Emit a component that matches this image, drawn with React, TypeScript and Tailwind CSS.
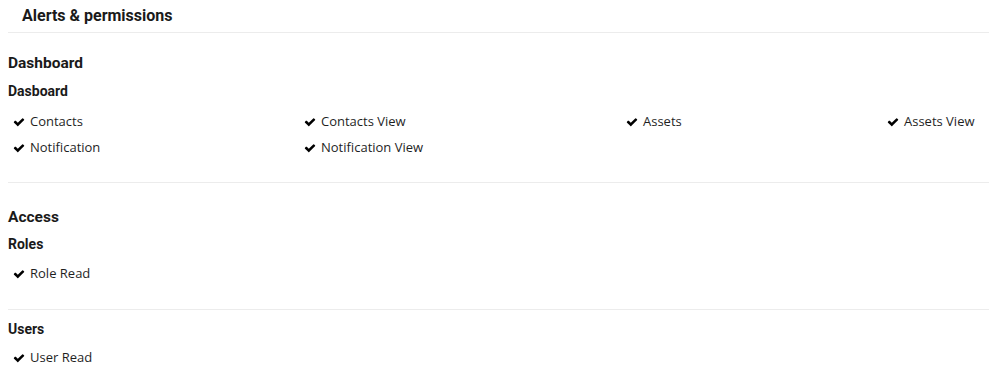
import React from "react";

const Check = () => (
  <svg viewBox="0 0 1792 1792" className="w-[12px] h-[12px] text-black" fill="currentColor">
    <path d="M1671 566q0 40-28 68l-724 724-136 136q-28 28-68 28t-68-28l-136-136-362-362q-28-28-28-68t28-68l136-136q28-28 68-28t68 28l294 295 656-657q28-28 68-28t68 28l136 136q28 28 28 68z" />
  </svg>
);

const Item = ({ label }: { label: string }) => (
  <div className="flex items-center gap-[5px] h-[26px]">
    <Check />
    <span className="text-[13px] text-[#1f1f1f]" style={{ fontFamily: '"Open Sans", sans-serif' }}>{label}</span>
  </div>
);

export default function App() {
  return (
    <div className="bg-white w-[989px] h-[376px] overflow-hidden" style={{ fontFamily: "Roboto, sans-serif" }}>
      <div className="h-[33px] flex items-center pl-[14px] ml-[8px] border-b border-[#ececec]">
        <h1 className="text-[16px] font-bold text-[#1a1a1a]">Alerts &amp; permissions</h1>
      </div>
      <div className="pl-[8px]">
        <div className="pt-[20px] pb-[21px] border-b border-[#ececec]">
          <h2 className="text-[15.5px] font-bold text-[#1a1a1a] leading-[20px]">Dashboard</h2>
          <h3 className="text-[14px] font-bold text-[#1a1a1a] leading-[20px] mt-[8px]">Dasboard</h3>
          <div className="grid grid-cols-[291px_322px_261px_1fr] pl-[5px] mt-[8px]">
            <Item label="Contacts" />
            <Item label="Contacts View" />
            <Item label="Assets" />
            <Item label="Assets View" />
            <Item label="Notification" />
            <Item label="Notification View" />
          </div>
        </div>
        <div className="pt-[24px] pb-[22px] border-b border-[#ececec]">
          <h2 className="text-[15.5px] font-bold text-[#1a1a1a] leading-[20px]">Access</h2>
          <h3 className="text-[14px] font-bold text-[#1a1a1a] leading-[20px] mt-[7px]">Roles</h3>
          <div className="pl-[5px] mt-[7px]">
            <Item label="Role Read" />
          </div>
        </div>
        <div className="pt-[9px]">
          <h3 className="text-[14px] font-bold text-[#1a1a1a] leading-[20px]">Users</h3>
          <div className="pl-[5px] mt-[6px]">
            <Item label="User Read" />
          </div>
        </div>
      </div>
    </div>
  );
}
